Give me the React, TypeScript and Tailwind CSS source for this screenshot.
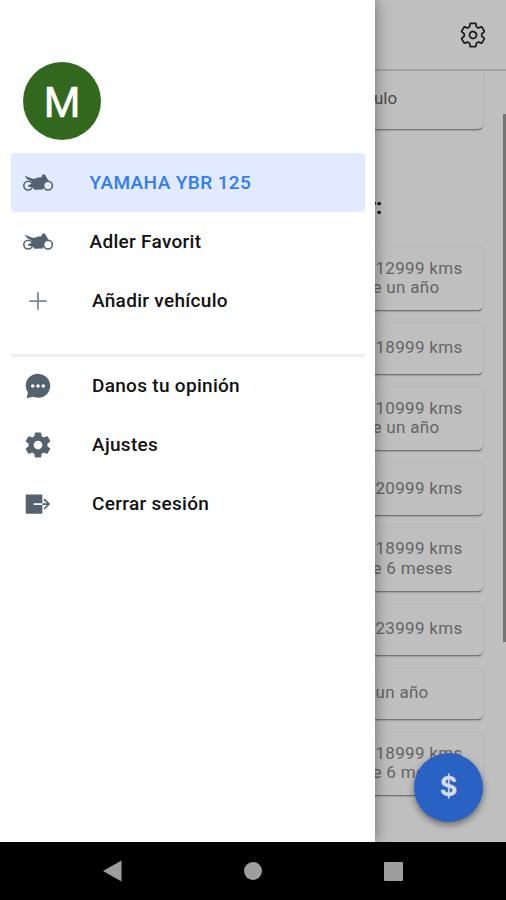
import type { ReactNode } from "react"
import {
  IoAddSharp,
  IoChatbubbleEllipsesSharp,
  IoExitSharp,
  IoSettingsOutline,
  IoSettingsSharp,
} from "react-icons/io5"

const services = [
  { lines: ["12999 kms", "e un año"] },
  { lines: ["18999 kms"] },
  { lines: ["10999 kms", "e un año"] },
  { lines: ["20999 kms"] },
  { lines: ["18999 kms", "e 6 meses"] },
  { lines: ["23999 kms"] },
  { lines: ["un año"] },
  { lines: ["18999 kms", "e 6 meses"] },
]

function Motorcycle() {
  return (
    <svg viewBox="0 0 32 20" className="w-8 h-5">
      <g fill="none" stroke="currentColor" strokeWidth="1.6">
        <circle cx="6.2" cy="12.6" r="4.4" />
        <circle cx="26" cy="12.6" r="4.4" />
      </g>
      <path
        fill="currentColor"
        d="M2.6 2.8 L8.4 5 L12 6 Q15.5 3.8 19.6 4.2 L20 2 L22.6 1.2 L24 3.4 L26.6 8 L23 8.8 L21.8 12 L21 16.4 L12.2 16.8 L11 14.2 L6 13.8 L6.2 12.2 L10.2 10.6 L9.4 8.2 L5 6 Z"
      />
    </svg>
  )
}

function MenuItem({ icon, label, active, vehicle }: { icon: ReactNode; label: string; active?: boolean; vehicle?: boolean }) {
  return (
    <li
      className={`flex h-[59px] items-center rounded text-[19px] font-medium ${
        active ? "bg-[#e1eafe] text-[#2f7cf6]" : "text-[#111]"
      }`}
    >
      <span className="ml-[10.5px] flex w-8 justify-center text-[#54616f]">{icon}</span>
      <span
        className={`pt-0.5 ${
          active ? "ml-[36px] tracking-[0.4px]" : vehicle ? "ml-[36px] tracking-[0.3px]" : "ml-[38.5px] tracking-[0.3px]"
        }`}
      >
        {label}
      </span>
    </li>
  )
}

function SideMenu() {
  return (
    <aside className="absolute left-0 top-0 z-20 h-[842px] w-[375px] bg-white px-2.5 pt-[62px] shadow-[0_0_14px_rgba(0,0,0,0.45)]">
      <div className="ml-[13px] flex h-[78px] w-[78px] items-center justify-center rounded-full bg-[#33691e] pt-0.5 text-[42px] font-normal text-white [-webkit-text-stroke:0.6px_white]">
        M
      </div>
      <ul className="mt-[13px] pl-px">
        <MenuItem icon={<Motorcycle />} label="YAMAHA YBR 125" active vehicle />
        <MenuItem icon={<Motorcycle />} label="Adler Favorit" vehicle />
        <MenuItem icon={<IoAddSharp size={28} className="text-[#7c8692]" />} label="Añadir vehículo" />
      </ul>
      <hr className="mt-[24px] ml-px border-0 h-[3px] bg-[#ededed]" />
      <ul className="-mt-px pl-px">
        <MenuItem icon={<IoChatbubbleEllipsesSharp size={28} />} label="Danos tu opinión" />
        <MenuItem icon={<IoSettingsSharp size={28} />} label="Ajustes" />
        <MenuItem icon={<IoExitSharp size={28} />} label="Cerrar sesión" />
      </ul>
    </aside>
  )
}

function NavigationBar() {
  return (
    <footer className="flex h-[58px] items-center bg-black pl-[103px] text-[#9e9e9e]">
      <svg viewBox="0 0 20 22" className="h-[22px] w-5" fill="currentColor">
        <path d="M0 11 L18.5 0.5 V21.5 Z" />
      </svg>
      <div className="ml-[121px] h-[18px] w-[18px] rounded-full bg-current"></div>
      <div className="ml-[122px] h-[19px] w-[19px] rounded-[1px] bg-current"></div>
    </footer>
  )
}

export default function App() {
  return (
    <div className="relative flex h-[900px] w-[506px] flex-col overflow-hidden bg-[#bfbfbf] font-['Roboto',sans-serif]">
      <header className="flex h-[71px] shrink-0 items-center justify-end border-b-2 border-[#a3a3a3] pr-[19px] text-[#1c1c1c]">
        <IoSettingsOutline size={28} />
      </header>
      <main className="flex h-[771px] shrink-0 justify-between overflow-hidden">
        <div className="ml-[22px] w-[461px]">
          <div className="h-[58px] rounded-b-[5px] pl-[352px] pt-[15px] text-[17px] leading-6 text-[#4c4c4c] shadow-[0_2px_2px_-1px_rgba(0,0,0,0.5),0_0_2px_rgba(0,0,0,0.12)]">
            ulo
          </div>
          <h2 className="mt-[62px] pl-[346px] text-[22px] font-bold leading-8 text-black">r:</h2>
          <div className="mt-[24px] flex flex-col gap-[13px]">
            {services.map((service, i) => (
              <div
                key={i}
                className={`flex flex-col justify-center rounded-[5px] pl-[352px] pb-px text-[17px] leading-[19.5px] tracking-[0.3px] text-[#656565] shadow-[0_2px_2px_-1px_rgba(0,0,0,0.5),0_0_2px_rgba(0,0,0,0.12)] ${
                  service.lines.length > 1 ? "h-[63px]" : "h-[51.3px]"
                }`}
              >
                {service.lines.map((line) => (
                  <p key={line} className={line.startsWith("e ") ? "-ml-[1.5px]" : "ml-[1.5px]"}>
                    {line}
                  </p>
                ))}
              </div>
            ))}
          </div>
        </div>
        <div className="mt-[43px] h-[528px] w-[3px] bg-[#757575]"></div>
      </main>
      <NavigationBar />
      <SideMenu />
      <button className="absolute left-[414px] top-[753px] z-10 h-[69px] w-[69px] rounded-full bg-[#2a62c4] font-['Inter',sans-serif] text-[27px] font-bold text-[#d5dbe6] shadow-[0_3px_7px_rgba(0,0,0,0.45)]">
        $
      </button>
    </div>
  )
}
